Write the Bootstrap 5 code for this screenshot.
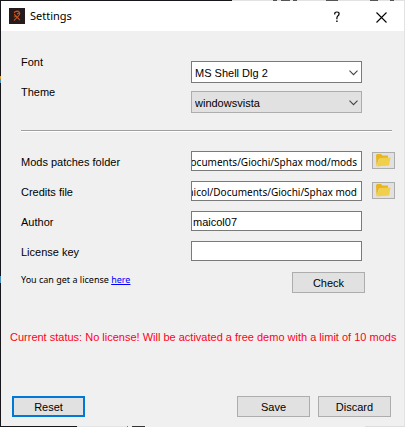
<!DOCTYPE html>
<html lang="en">
<head>
<meta charset="utf-8">
<meta name="viewport" content="width=device-width, initial-scale=1">
<title>Settings</title>
<link href="https://cdn.jsdelivr.net/npm/bootstrap@5.3.0/dist/css/bootstrap.min.css" rel="stylesheet">
<style>
  body { font: 11px/16px "Liberation Sans", Arial, sans-serif; color: #000; }
  /* desktop edge that shows around the dialog */
  .desktop {
    padding: 1px;
    background:
      linear-gradient(#17161b, #17161b) 0 0 / 232px 1px no-repeat,
      linear-gradient(#17161b 76px, #e0a040 76px 79px, #4a90b8 79px 83px, #17161b 83px 276px, #4a90b8 276px 283px, #17161b 283px) 0 0 / 1px 100% no-repeat,
      linear-gradient(90deg, #17161b 77px, #e4e4e4 77px 127px, #777 127px 128px, #f0f0f0 128px 132px, #333 132px 145px, #f0f0f0 145px 365px, #ddd 365px) 0 100% / 100% 1px no-repeat,
      linear-gradient(90deg, transparent 273px, #555 273px 277px, transparent 277px 281px, #555 281px 290px, transparent 290px 293px, #555 293px 297px, transparent 297px 326px, #555 326px 338px, transparent 338px 370px, #555 370px 378px, transparent 378px 390px, #555 390px 394px, transparent 394px) 0 0 / 100% 1px no-repeat,
      #e2e2e2;
  }
  .dialog-window { background: #f0f0f0; min-width: 0; }
  .title-bar { height: 30px; background: #fff; padding: 0 15px 0 8px; font: 11px/16px "Noto Sans", sans-serif; }
  .title-text { margin-left: 5px; }
  .title-btn { width: 24px; height: 24px; border: 0; background: none; padding: 0; }
  .settings-form { padding: 30px 9px 0 20px; }
  .setting-row { display: grid; grid-template-columns: 170px minmax(0, 1fr) 23px; height: 30px; align-items: start; }
  .setting-row label { line-height: 16px; margin-top: -7px; }
  .setting-row.path-row label, .setting-row.text-row label { margin-top: 3px; }
  .field { width: 100%; height: 20px; border: 1px solid #7a7a7a; border-radius: 0; background: #fff; padding: 1px 1px 0; line-height: 16px; color: #000; margin: 0; }
  .field-wrap { margin-right: 10px; }
  .path { direction: rtl; padding: 1px 4px 0 0; font: 10px/16px "Noto Sans", sans-serif; }
  select.field { appearance: none; height: 22px; padding: 2px 16px 0 3px; }
  select.themed { background: #e1e1e1; border-color: #adadad; }
  .chevron { right: 4px; top: 9px; pointer-events: none; }
  .rule { height: 2px; background: #a0a0a0; border-bottom: 1px solid #fff; margin: 9px 3px 19px 0; }
  .pick, .push { border: 1px solid #adadad; background: #e1e1e1; color: #000; }
  .pick { width: 23px; height: 17px; padding: 0; margin-top: 1px; }
  .push { width: 73px; height: 21px; line-height: 16px; padding: 0; }
  .push.active-push { border: 2px solid #0078d7; }
  .license-note { font: 9px/16px "Noto Sans", sans-serif; }
  .license-note a { color: #00f; }
  .license-row { margin: 1px 30px 0 0; }
  .status { color: #ff0019; margin: 36px 3px 0 9px; }
  .actions { padding: 0 13px 9px 11px; }
</style>
<script src="https://cdn.jsdelivr.net/npm/bootstrap@5.3.0/dist/js/bootstrap.bundle.min.js"></script>
</head>
<body>
<div class="desktop min-vh-100 d-flex flex-column">
  <main class="dialog-window flex-grow-1 d-flex flex-column">
    <header class="title-bar d-flex align-items-center">
      <svg width="16" height="16" viewBox="0 0 16 16" aria-hidden="true"><path fill="#251b1d" d="M0 0h16v16H0z"/><g fill="none" stroke="#c8541e" stroke-width="1.2"><path d="M8 3.200c2 0 3 1.300 2.600 2.800C10.200 8 7.500 9.500 5 12.500M5.200 5.200C5.500 3.800 6.600 3.300 8 3.200M5.400 6.200C6 8.600 9 9 10.800 12.200M4.800 9l3-1M8 6l2-1"/></g></svg>
      <span class="title-text">Settings</span>
      <div class="ms-auto d-flex">
        <button class="title-btn" type="button" aria-label="Help"><svg width="10" height="12" viewBox="0 0 10 12"><path d="M2.700 3.500V3q0-2 2.200-2t2.200 1.800q0 1.200-1.100 2T4.900 7.300v.9" fill="none" stroke="#000" stroke-width="1.200"/><path d="M4.200 9.500h1.400V11H4.200z"/></svg></button>
        <button class="title-btn ms-3" type="button" aria-label="Close"><svg class="ms-2" width="11" height="11" viewBox="0 0 11 11"><path d="M.5.5l10 10M10.500.5l-10 10" stroke="#000" stroke-width="1.100"/></svg></button>
      </div>
    </header>

    <form class="settings-form">
      <div class="setting-row">
        <label for="font">Font</label>
        <div class="field-wrap position-relative">
          <select id="font" class="field"><option>MS Shell Dlg 2</option></select>
          <svg class="chevron position-absolute" width="9" height="6" viewBox="0 0 9 6"><path d="M.5.7l4 4 4-4" fill="none" stroke="#444" stroke-width="1.100"/></svg>
        </div>
      </div>
      <div class="setting-row">
        <label for="theme">Theme</label>
        <div class="field-wrap position-relative">
          <select id="theme" class="field themed"><option>windowsvista</option></select>
          <svg class="chevron position-absolute" width="9" height="6" viewBox="0 0 9 6"><path d="M.5.7l4 4 4-4" fill="none" stroke="#444" stroke-width="1.100"/></svg>
        </div>
      </div>
      <div class="rule"></div>
      <div class="setting-row path-row">
        <label for="mods">Mods patches folder</label>
        <div class="field-wrap d-flex"><input id="mods" class="field path" type="text" value="Documents/Giochi/Sphax mod/mods"></div>
        <button class="pick d-flex justify-content-center align-items-center" type="button" aria-label="Browse mods folder"><svg width="15" height="13" viewBox="0 0 15 13"><path fill="#e8b51c" d="M0 1.200L1 0h4l1.500 1.500H12v3H3L.5 12z"/><path fill="#f0cf4c" d="M3.500 4l11-.5-1.500 8L.5 12.500z"/></svg></button>
      </div>
      <div class="setting-row path-row">
        <label for="credits">Credits file</label>
        <div class="field-wrap d-flex"><input id="credits" class="field path" type="text" value="maicol/Documents/Giochi/Sphax mod"></div>
        <button class="pick d-flex justify-content-center align-items-center" type="button" aria-label="Browse credits file"><svg width="15" height="13" viewBox="0 0 15 13"><path fill="#e8b51c" d="M0 1.200L1 0h4l1.500 1.500H12v3H3L.5 12z"/><path fill="#f0cf4c" d="M3.500 4l11-.5-1.500 8L.5 12.500z"/></svg></button>
      </div>
      <div class="setting-row text-row">
        <label for="author">Author</label>
        <div class="field-wrap d-flex"><input id="author" class="field" type="text" value="maicol07"></div>
      </div>
      <div class="setting-row text-row">
        <label for="license">License key</label>
        <div class="field-wrap d-flex"><input id="license" class="field" type="text"></div>
      </div>
      <div class="license-row d-flex justify-content-between align-items-start">
        <div class="license-note">You can get a license <a href="#license">here</a></div>
        <button class="push" type="button">Check</button>
      </div>
    </form>

    <p class="status" role="status">Current status: No license! Will be activated a free demo with a limit of 10 mods</p>

    <footer class="actions d-flex gap-2 mt-auto">
      <button class="push active-push me-auto" type="button">Reset</button>
      <button class="push" type="button">Save</button>
      <button class="push" type="button">Discard</button>
    </footer>
  </main>
</div>
</body>
</html>
